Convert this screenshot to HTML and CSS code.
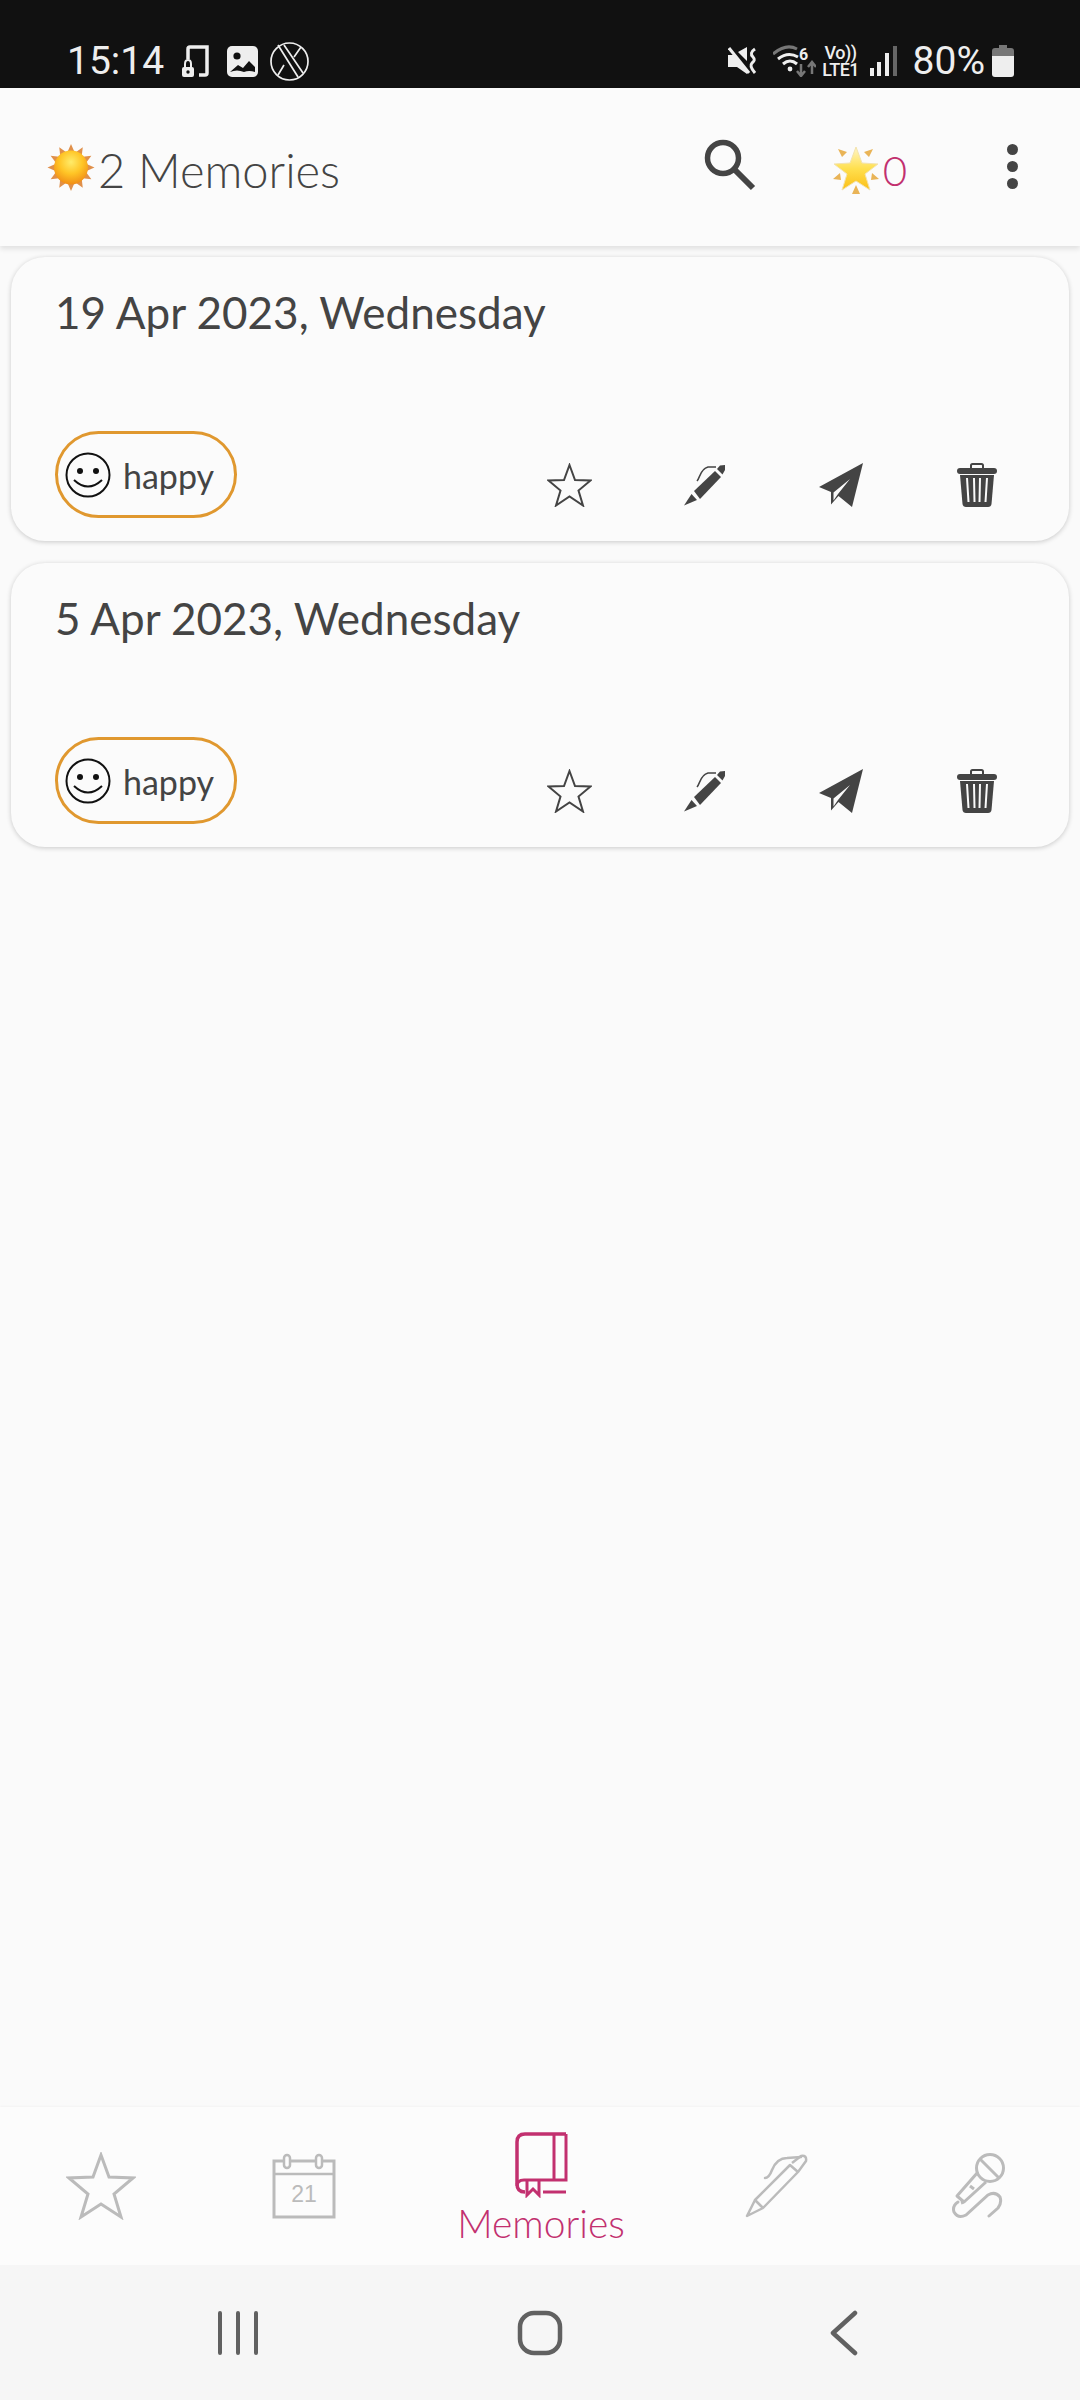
FILE: index.html
```html
<!DOCTYPE html>
<html lang="en">
<head>
  <meta charset="UTF-8" />
  <meta name="viewport" content="width=device-width, initial-scale=1.0" />
  <title>Memories</title>
  <link rel="stylesheet" href="styles.css">
</head>
<body>
  <svg class="defs" width="0" height="0">
    <defs>
      <radialGradient id="sunFill" cx="50%" cy="34%" r="68%">
        <stop offset="0" stop-color="#ffec6a" />
        <stop offset="0.5" stop-color="#ffc526" />
        <stop offset="1" stop-color="#f08a14" />
      </radialGradient>
      <linearGradient id="starFill" x1="0" y1="0" x2="0" y2="1">
        <stop offset="0" stop-color="#fff6c8" />
        <stop offset="0.5" stop-color="#ffe04f" />
        <stop offset="1" stop-color="#fbbf16" />
      </linearGradient>
      <path id="ray" d="M20 8 L23.500 0 L27 8 Z" fill="#e0904a" />
      <g id="actStar"><path d="M22.500 2 L28 17 L43.500 17.500 L31.500 27.500 L36 42.500 L22.500 33.500 L9 42.500 L13.500 27.500 L1.500 17.500 L17 17 Z" fill="none" stroke="#444" stroke-width="2" /></g>
      <g id="actPen">
        <path d="M10 27 L31 7 L37 13 L16 35 Z" fill="#444" />
        <path d="M7.500 30 L13 36 L0 41.500 Z" fill="#444" />
        <path d="M33 5 L36 1.500 L41 1 L41 6 L38.500 10.500 Z" fill="#444" />
        <path d="M13 17 C16 14 16 5 24 3 L32 3" fill="none" stroke="#444" stroke-width="1.600" />
      </g>
      <g id="actPlane">
        <path d="M44 0 L0 24 L12 29 L12 41.500 L19.500 33 L33 44 Z" fill="#444" />
        <path d="M31 16 L14.500 29.500 L14.500 37.500 L19 31 Z" fill="#fafafa" />
      </g>
      <g id="actTrash">
        <rect x="14" y="1" width="12" height="6" rx="1.500" fill="none" stroke="#444" stroke-width="2" />
        <rect x="0" y="5" width="40" height="6" rx="3" fill="#444" />
        <path d="M3 12 H37 L34.500 41 Q34 44 31 44 H9 Q6 44 5.500 41 Z" fill="#444" />
        <path d="M10 15 L11.500 39 M17 15 L17.500 39 M23 15 L22.500 39 M30 15 L28.500 39" stroke="#fafafa" stroke-width="2" fill="none" />
      </g>
      <g id="face">
        <circle cx="23" cy="23" r="21.500" fill="none" stroke="#111" stroke-width="2" />
        <circle cx="15" cy="19" r="3" fill="#111" />
        <circle cx="31" cy="19" r="3" fill="#111" />
        <path d="M9 28 Q23 41 37 28" fill="none" stroke="#111" stroke-width="2" />
      </g>
    </defs>
  </svg>

  <div class="status-bar">
    <span class="clock">15:14</span>
    <svg class="st-phone" width="27" height="32" viewBox="0 0 27 32">
      <path d="M6 14 V4 Q6 2 8 2 H25 V28 Q25 30 23 30 H17" fill="none" stroke="#eee" stroke-width="3.500" />
      <rect x="0" y="22" width="12" height="10" rx="2" fill="#eee" />
      <path d="M3 22 V19 Q3 15 6 15 Q9 15 9 19 V22" fill="none" stroke="#eee" stroke-width="2" />
      <circle cx="6" cy="27" r="1.700" fill="#111" />
    </svg>
    <svg class="st-image" width="31" height="31" viewBox="0 0 31 31">
      <rect width="31" height="31" rx="5" fill="#eee" />
      <circle cx="10" cy="10" r="3.600" fill="#111" />
      <path d="M3 26 L11 19 L16 22 L22 15 L28 21 V26 Q22 24 17 26 Q10 23 3 26 Z" fill="#111" />
    </svg>
    <svg class="st-x" width="39" height="39" viewBox="0 0 39 39">
      <circle cx="19.500" cy="19.500" r="18.500" fill="none" stroke="#eee" stroke-width="1.700" />
      <path d="M8 3 L28 35 M14 3 L33 31 M24 15 L31 5 M14 23 L8 33" fill="none" stroke="#eee" stroke-width="1.700" />
    </svg>

    <div class="status-right">
      <svg class="st-mute" width="29" height="28" viewBox="0 0 29 28">
        <path d="M0 8 H6 L8 9 L19 22 V27 L9 20 H0 Z M10 5 L19 0 V14 Z" fill="#eee" />
        <path d="M1 1 L21 26" stroke="#eee" stroke-width="3" />
        <path d="M27 2 Q21 6 25 10 Q28 13 24 16 Q21 19 27 26" fill="none" stroke="#eee" stroke-width="3" />
      </svg>
      <svg class="st-wifi" width="43" height="32" viewBox="0 0 43 32">
        <path d="M0 9 Q13 -2 24 4" fill="none" stroke="#777" stroke-width="3" />
        <path d="M5 14 Q15 6 25 12" fill="none" stroke="#eee" stroke-width="3" />
        <path d="M10 19 Q17 13 24 19" fill="none" stroke="#eee" stroke-width="3" />
        <circle cx="17" cy="24" r="2.400" fill="#eee" />
        <text x="26" y="15" class="wifi-six">6</text>
        <path d="M28 19 V30 M24 26 L28 31 L32 26" fill="none" stroke="#777" stroke-width="2.500" />
        <path d="M39 29 V18 M35 22 L39 17 L43 22" fill="none" stroke="#777" stroke-width="2.500" />
      </svg>
      <div class="volte">
        <span>Vo))</span>
        <span>LTE1</span>
      </div>
      <svg class="st-signal" width="27" height="30" viewBox="0 0 27 30">
        <rect x="0" y="22" width="4" height="8" fill="#eee" />
        <rect x="7" y="16" width="4" height="14" fill="#eee" />
        <rect x="15" y="7" width="4" height="23" fill="#eee" />
        <rect x="23" y="0" width="4" height="30" fill="#666" />
      </svg>
      <span class="battery-pct">80%</span>
      <svg class="st-battery" width="22" height="32" viewBox="0 0 22 32">
        <path d="M7 0 H15 V3 H19 Q22 3 22 6 V11 H0 V6 Q0 3 3 3 H7 Z" fill="#777" />
        <path d="M0 11 H22 V29 Q22 32 19 32 H3 Q0 32 0 29 Z" fill="#eee" />
      </svg>
    </div>
  </div>

  <header class="app-bar">
    <svg class="sun" width="48" height="47" viewBox="0 0 47 47">
      <use href="#ray" />
      <use href="#ray" transform="rotate(30 23.500 23.500)" />
      <use href="#ray" transform="rotate(60 23.500 23.500)" />
      <use href="#ray" transform="rotate(90 23.500 23.500)" />
      <use href="#ray" transform="rotate(120 23.500 23.500)" />
      <use href="#ray" transform="rotate(150 23.500 23.500)" />
      <use href="#ray" transform="rotate(180 23.500 23.500)" />
      <use href="#ray" transform="rotate(210 23.500 23.500)" />
      <use href="#ray" transform="rotate(240 23.500 23.500)" />
      <use href="#ray" transform="rotate(270 23.500 23.500)" />
      <use href="#ray" transform="rotate(300 23.500 23.500)" />
      <use href="#ray" transform="rotate(330 23.500 23.500)" />
      <circle cx="23.500" cy="23.500" r="17" fill="url(#sunFill)" />
    </svg>
    <h1 class="app-title">2 Memories</h1>
    <svg class="search" width="52" height="52" viewBox="0 0 52 52">
      <circle cx="19" cy="19" r="15.500" fill="none" stroke="#444" stroke-width="5.500" />
      <path d="M31 31 L49 49" stroke="#444" stroke-width="6" />
    </svg>
    <svg class="sparkle" width="48" height="50" viewBox="0 0 48 50">
      <path d="M24 1 L30 17 L46 18 L33 28 L38 44 L24 35 L10 44 L15 28 L2 18 L18 17 Z" fill="url(#starFill)" stroke="#f3e3ae" stroke-width="1" />
      <path d="M6 3 L15 6 L10 11 Z M41 3 L32 6 L37 11 Z M1 33 L8 27 L9 34 Z M47 33 L40 27 L39 34 Z M24 39 L28 48 H20 Z" fill="#e9b457" />
    </svg>
    <span class="star-count">0</span>
    <div class="more">
      <span class="dot"></span>
      <span class="dot"></span>
      <span class="dot"></span>
    </div>
  </header>

  <main class="memory-list">
    <article class="memory-card">
      <h2 class="memory-date">19 Apr 2023, Wednesday</h2>
      <div class="memory-foot">
        <div class="mood-chip">
          <svg width="46" height="46" viewBox="0 0 46 46"><use href="#face" /></svg>
          <span>happy</span>
        </div>
        <div class="memory-actions">
          <svg width="45" height="44" viewBox="0 0 45 44"><use href="#actStar" /></svg>
          <svg width="42" height="42" viewBox="0 0 42 42"><use href="#actPen" /></svg>
          <svg width="44" height="44" viewBox="0 0 44 44"><use href="#actPlane" /></svg>
          <svg width="40" height="44" viewBox="0 0 40 44"><use href="#actTrash" /></svg>
        </div>
      </div>
    </article>
    <article class="memory-card">
      <h2 class="memory-date">5 Apr 2023, Wednesday</h2>
      <div class="memory-foot">
        <div class="mood-chip">
          <svg width="46" height="46" viewBox="0 0 46 46"><use href="#face" /></svg>
          <span>happy</span>
        </div>
        <div class="memory-actions">
          <svg width="45" height="44" viewBox="0 0 45 44"><use href="#actStar" /></svg>
          <svg width="42" height="42" viewBox="0 0 42 42"><use href="#actPen" /></svg>
          <svg width="44" height="44" viewBox="0 0 44 44"><use href="#actPlane" /></svg>
          <svg width="40" height="44" viewBox="0 0 40 44"><use href="#actTrash" /></svg>
        </div>
      </div>
    </article>
  </main>

  <nav class="tab-bar">
    <div class="tab">
      <svg width="70" height="68" viewBox="0 0 70 68">
        <path d="M35 3 L43 25 L67 26 L48 42 L55 65 L35 52 L15 65 L22 42 L3 26 L27 25 Z" fill="none" stroke="#bbb" stroke-width="3" />
      </svg>
    </div>
    <div class="tab">
      <svg width="64" height="66" viewBox="0 0 64 66">
        <rect x="2" y="8" width="60" height="56" fill="none" stroke="#bbb" stroke-width="3" />
        <path d="M2 21 H62" stroke="#bbb" stroke-width="2.500" />
        <rect x="12" y="2" width="6" height="13" rx="3" fill="#fcfcfc" stroke="#bbb" stroke-width="2.500" />
        <rect x="44" y="2" width="6" height="13" rx="3" fill="#fcfcfc" stroke="#bbb" stroke-width="2.500" />
        <text x="32" y="49" class="cal-day">21</text>
      </svg>
    </div>
    <div class="tab tab-active">
      <svg width="53" height="66" viewBox="0 0 53 66">
        <path d="M51 2 H10 Q2 2 2 10 V52 Q2 60 10 60" fill="none" stroke="#c2306f" stroke-width="3.500" />
        <path d="M51 2 V48 H9 Q2 48 2 54 M39 2 V48" fill="none" stroke="#c2306f" stroke-width="3" />
        <path d="M12 48 V63 L18 57 L24 63 V48 M28 60 H51" fill="none" stroke="#c2306f" stroke-width="3" />
      </svg>
      <span class="tab-label">Memories</span>
    </div>
    <div class="tab">
      <svg width="64" height="64" viewBox="0 0 64 64">
        <path d="M10 46 L45 11 L53 18 L18 54 Z M10 46 L2 62 L18 54 M47 9 L56 2 Q62 1 61 7 L53 18" fill="none" stroke="#bbb" stroke-width="2.500" stroke-linejoin="round" />
        <path d="M20 24 Q24 24 27 16 Q32 4 42 4 L56 3" fill="none" stroke="#bbb" stroke-width="2.500" stroke-linecap="round" />
      </svg>
    </div>
    <div class="tab">
      <svg width="56" height="66" viewBox="0 0 56 66">
        <circle cx="39" cy="15" r="13.500" fill="none" stroke="#bbb" stroke-width="3" />
        <path d="M29 6 L48 25" stroke="#bbb" stroke-width="3" />
        <path d="M27 19 L6 43 L13 49 L35 29 M13 49 L10 50" fill="none" stroke="#bbb" stroke-width="3" stroke-linejoin="round" />
        <path d="M19 33 L23 36" stroke="#bbb" stroke-width="3" />
        <path d="M7 49 Q1 53 3 59 Q7 66 15 62 L37 42 Q44 38 49 44 Q51 50 47 55 L38 63" fill="none" stroke="#bbb" stroke-width="3" stroke-linecap="round" />
      </svg>
    </div>
  </nav>

  <div class="system-nav">
    <svg width="40" height="44" viewBox="0 0 40 44">
      <path d="M2 2 V42 M20 2 V42 M38 2 V42" stroke="#616161" stroke-width="4" stroke-linecap="round" />
    </svg>
    <svg width="46" height="46" viewBox="0 0 46 46">
      <rect x="3" y="3" width="40" height="40" rx="14" fill="none" stroke="#616161" stroke-width="4.500" />
    </svg>
    <svg class="sys-back" width="28" height="46" viewBox="0 0 28 46">
      <path d="M25 3 L3 23 L25 43" fill="none" stroke="#616161" stroke-width="4.500" stroke-linecap="round" stroke-linejoin="round" />
    </svg>
  </div>
</body>
</html>
```

FILE: styles.css
```css
* {
  box-sizing: border-box;
}
body {
  margin: 0;
  width: 1080px;
  height: 2400px;
  display: flex;
  flex-direction: column;
  background-color: #fafafa;
  font-family: Lato, "Open Sans", sans-serif;
  color: #444;
  overflow: hidden;
}
svg {
  display: block;
  flex: none;
}
.defs {
  position: absolute;
}

.status-bar {
  height: 88px;
  flex: none;
  display: flex;
  align-items: center;
  padding: 34px 66px 0 67px;
  background-color: #111;
  color: #eee;
  font-family: Roboto, sans-serif;
}
.clock, .battery-pct {
  font-size: 39px;
  line-height: 46px;
}
.st-phone {
  margin-left: 18px;
}
.st-image {
  margin-left: 18px;
}
.st-x {
  margin-left: 12px;
}
.status-right {
  margin-left: auto;
  display: flex;
  align-items: center;
}
.st-wifi {
  margin-left: 16px;
}
.wifi-six {
  font: bold 16px Roboto, sans-serif;
  fill: #eee;
}
.volte {
  margin-left: 6px;
  width: 38px;
  display: flex;
  flex-direction: column;
  font-size: 18px;
  font-weight: 500;
  line-height: 17px;
  letter-spacing: -0.5px;
  text-align: center;
  white-space: nowrap;
}
.st-signal {
  margin-left: 10px;
}
.battery-pct {
  margin-left: 16px;
}
.st-battery {
  margin-left: 7px;
}

.app-bar {
  height: 158px;
  flex: none;
  display: flex;
  align-items: center;
  padding-left: 47px;
  background-color: #fbfbfb;
  box-shadow: 0 3px 5px rgba(0, 0, 0, 0.1);
  position: relative;
}
.app-title {
  margin: 6px 0 0 3px;
  font-size: 47px;
  font-weight: 300;
  color: #444;
}
.search {
  margin-left: auto;
  margin-bottom: 4px;
}
.sparkle {
  margin-left: 76px;
  margin-top: 7px;
}
.star-count {
  margin-left: 3px;
  margin-top: 6px;
  font-size: 42px;
  font-weight: 300;
  color: #c2306f;
}
.more {
  width: 11px;
  margin: 0 62px 0 100px;
  display: flex;
  flex-direction: column;
  gap: 6px;
  padding-bottom: 2px;
}
.dot {
  width: 11px;
  height: 11px;
  border-radius: 50%;
  background-color: #444;
}

.memory-list {
  flex: 1;
  display: flex;
  flex-direction: column;
  gap: 22px;
  padding: 11px;
}
.memory-card {
  height: 284px;
  display: flex;
  flex-direction: column;
  padding: 29px 24px 23px 44px;
  border-radius: 34px;
  background-color: #fbfbfb;
  box-shadow: 0 1px 5px rgba(0, 0, 0, 0.2);
}
.memory-date {
  margin: 0;
  font-size: 44px;
  font-weight: 400;
  color: #444;
}
.memory-foot {
  margin-top: auto;
  display: flex;
  align-items: flex-end;
}
.mood-chip {
  width: 182px;
  height: 87px;
  display: flex;
  align-items: center;
  gap: 12px;
  padding-left: 7px;
  border: 3px solid #e0982f;
  border-radius: 44px;
  font-size: 34px;
}
.mood-chip span {
  padding-top: 2px;
}
.memory-actions {
  margin-left: auto;
  margin-bottom: 11px;
  display: grid;
  grid-template-columns: repeat(4, 136px);
  justify-items: center;
  align-items: center;
}

.tab-bar {
  height: 158px;
  flex: none;
  display: grid;
  grid-template-columns: 202px 204px 270px 202px 202px;
  background-color: #fcfcfc;
  box-shadow: 0 -1px 2px rgba(0, 0, 0, 0.03);
}
.tab {
  display: flex;
  flex-direction: column;
  align-items: center;
  justify-content: center;
}
.cal-day {
  font: 23px "Liberation Sans", sans-serif;
  fill: #bbb;
  text-anchor: middle;
}
.tab-label {
  margin: 4px 0 -4px;
  font-size: 39px;
  font-weight: 300;
  line-height: 42px;
  color: #c2306f;
}

.system-nav {
  height: 135px;
  flex: none;
  display: grid;
  grid-template-columns: repeat(3, 302px);
  justify-content: center;
  justify-items: center;
  align-items: center;
  background-color: #f6f6f6;
}
.sys-back {
  margin-left: 3px;
}
```
